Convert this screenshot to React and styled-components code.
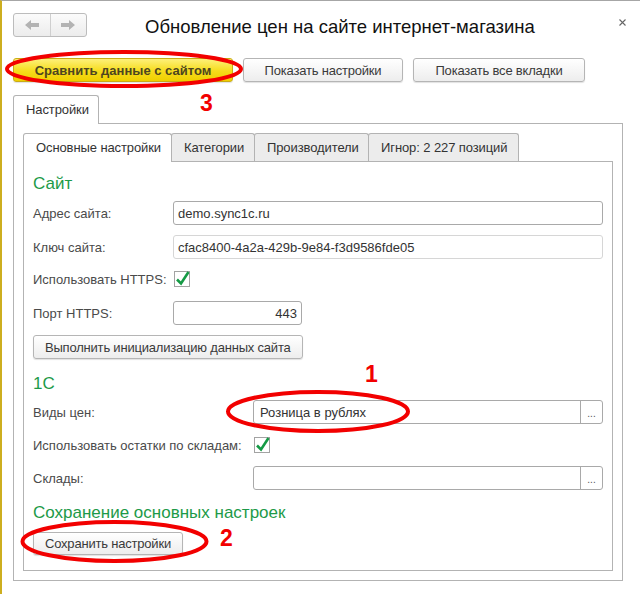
import React from "react";
import styled, { createGlobalStyle } from "styled-components";

const GlobalStyle = createGlobalStyle`
  body {
    margin: 0;
    background: #ffffff;
    font-family: "Liberation Sans", Arial, sans-serif;
  }
  * { box-sizing: border-box; }
`;

const Window = styled.div`
  position: relative;
  width: 640px;
  height: 594px;
  border-top: 1px solid #a6a6a6;
  border-left: 2px solid #cdae1f;
  background: #ffffff;
  display: flex;
  flex-direction: column;
  overflow: hidden;
`;

const Header = styled.div`
  display: flex;
  align-items: flex-start;
  padding: 12px 14px 0 11px;
  height: 36px;
`;

const Nav = styled.div`
  display: flex;
  width: 74px;
  height: 24px;
  border: 1px solid #bcbcbc;
  border-radius: 3px;
  background: linear-gradient(#fbfbfb, #ececec);
`;

const NavButton = styled.div`
  flex: 1;
  display: flex;
  align-items: center;
  justify-content: center;
  & + & {
    border-left: 1px solid #cfcfcf;
  }
`;

const Title = styled.div`
  margin: 2px 0 0 58px;
  font-size: 18.5px;
  line-height: 24px;
  color: #111111;
  white-space: nowrap;
`;

const Close = styled.div`
  margin: 6px 0 0 auto;
  width: 7px;
  height: 7px;
  display: flex;
`;

const Toolbar = styled.div`
  display: flex;
  gap: 10px;
  margin-top: 21px;
  padding-left: 11px;
`;

const Button = styled.div`
  height: ${(p) => p.$h || 24}px;
  width: ${(p) => (p.$w ? `${p.$w}px` : "auto")};
  padding: 0 11px;
  display: flex;
  align-items: center;
  justify-content: center;
  font-size: 13px;
  letter-spacing: -0.2px;
  color: #3a3a3a;
  white-space: nowrap;
  border: 1px solid #b5b5b5;
  border-radius: 3px;
  background: linear-gradient(#ffffff, #ededed);
  box-shadow: 0 1px 1px rgba(0, 0, 0, 0.12);
`;

const DefaultButton = styled(Button)`
  font-weight: bold;
  letter-spacing: 0;
  color: #4d4520;
  border-color: #c9ac14;
  background: linear-gradient(#fdf07a, #f6dc1b 55%, #efcf00);
`;

const TabStrip = styled.div`
  display: flex;
  align-items: flex-end;
  margin-top: ${(p) => p.$top || 0}px;
  padding-left: ${(p) => p.$left || 0}px;
  position: relative;
  z-index: 1;
`;

const Tab = styled.div`
  height: ${(p) => (p.$active ? 29 : 28)}px;
  width: ${(p) => p.$w}px;
  margin-bottom: ${(p) => (p.$active ? -1 : 0)}px;
  & + & {
    margin-left: -1px;
  }
  padding: 0 0 ${(p) => (p.$active ? 2 : 1)}px 12px;
  display: flex;
  align-items: center;
  font-size: 13px;
  letter-spacing: -0.1px;
  color: #333333;
  white-space: nowrap;
  border: 1px solid #b3b3b3;
  border-bottom: none;
  border-radius: 3px 3px 0 0;
  background: ${(p) => (p.$active ? "#ffffff" : "#ececec")};
`;

const OuterPanel = styled.div`
  margin-left: 11px;
  width: 610px;
  height: 458px;
  border: 1px solid #b3b3b3;
  padding: 9px;
  display: flex;
  flex-direction: column;
`;

const InnerPanel = styled.div`
  flex: 1;
  border: 1px solid #b3b3b3;
  padding: 0 9px;
  display: flex;
  flex-direction: column;
`;

const Heading = styled.div`
  margin-top: ${(p) => p.$top}px;
  height: 22px;
  font-size: 17px;
  line-height: 22px;
  color: #1d9a48;
  white-space: nowrap;
`;

const Row = styled.div`
  display: flex;
  align-items: center;
  height: 24px;
  margin-top: ${(p) => p.$top}px;
`;

const Label = styled.div`
  width: ${(p) => p.$w}px;
  flex: none;
  font-size: 13px;
  color: #4a4a4a;
  white-space: nowrap;
`;

const Field = styled.div`
  flex: ${(p) => (p.$w ? "none" : 1)};
  width: ${(p) => (p.$w ? `${p.$w}px` : "auto")};
  height: 24px;
  display: flex;
  align-items: center;
  justify-content: ${(p) => (p.$right ? "flex-end" : "flex-start")};
  padding: 0 4px;
  font-size: 13px;
  color: #333333;
  white-space: nowrap;
  border: 1px solid ${(p) => (p.$light ? "#d6d6d6" : "#a9a9a9")};
  border-radius: 3px;
  background: #ffffff;
`;

const ChoiceField = styled(Field)`
  padding: 0 0 0 6px;
  overflow: hidden;
`;

const FieldText = styled.span`
  flex: 1;
`;

const ChoiceButton = styled.div`
  width: 22px;
  height: 100%;
  border-left: 1px solid #a9a9a9;
  display: flex;
  align-items: flex-end;
  justify-content: center;
  padding-bottom: 5px;
  font-size: 10px;
  line-height: 8px;
  color: #555555;
`;

const Checkbox = styled.div`
  width: 16px;
  height: 16px;
  margin-left: 1px;
  border: 1px solid #a3a3a3;
  background: #ffffff;
  display: flex;
  svg {
    overflow: visible;
  }
`;

const Overlay = styled.svg`
  position: absolute;
  left: -2px;
  top: -1px;
  pointer-events: none;
`;

const Mark = styled.span`
  position: absolute;
  left: ${(p) => p.$x}px;
  top: ${(p) => p.$y}px;
  font-size: 23px;
  line-height: 23px;
  font-weight: bold;
  color: #f20000;
`;

function Arrow({ left }) {
  return (
    <svg width="14" height="10" viewBox="0 0 14 10">
      <polygon
        points="0,5 6,0 6,3 14,3 14,7 6,7 6,10"
        fill="#b3b3b3"
        transform={left ? undefined : "rotate(180 7 5)"}
      />
    </svg>
  );
}

function Check() {
  return (
    <svg width="14" height="14" viewBox="0 0 14 14">
      <path d="M2 7.5 L6 11.5 L13.5 0" fill="none" stroke="#159a45" strokeWidth="2.6" />
    </svg>
  );
}

function Choice({ children }) {
  return (
    <ChoiceField>
      <FieldText>{children}</FieldText>
      <ChoiceButton>...</ChoiceButton>
    </ChoiceField>
  );
}

export default function App() {
  return (
    <>
      <GlobalStyle />
      <Window>
        <Header>
          <Nav>
            <NavButton>
              <Arrow left />
            </NavButton>
            <NavButton>
              <Arrow />
            </NavButton>
          </Nav>
          <Title>Обновление цен на сайте интернет-магазина</Title>
          <Close>
            <svg width="7" height="7" viewBox="0 0 7 7">
              <path d="M0.5 0.5 L6.5 6.5 M6.5 0.5 L0.5 6.5" stroke="#666" strokeWidth="1.1" />
            </svg>
          </Close>
        </Header>

        <Toolbar>
          <DefaultButton $w={220}>Сравнить данные с сайтом</DefaultButton>
          <Button $w={160}>Показать настройки</Button>
          <Button $w={172}>Показать все вкладки</Button>
        </Toolbar>

        <TabStrip $top={13} $left={11}>
          <Tab $active $w={86}>Настройки</Tab>
        </TabStrip>
        <OuterPanel>
          <TabStrip>
            <Tab $active $w={149}>Основные настройки</Tab>
            <Tab $w={84}>Категории</Tab>
            <Tab $w={115}>Производители</Tab>
            <Tab $w={151}>Игнор: 2 227 позиций</Tab>
          </TabStrip>
          <InnerPanel>
            <Heading $top={11}>Сайт</Heading>
            <Row $top={6}>
              <Label $w={140}>Адрес сайта:</Label>
              <Field>demo.sync1c.ru</Field>
            </Row>
            <Row $top={10}>
              <Label $w={140}>Ключ сайта:</Label>
              <Field $light>cfac8400-4a2a-429b-9e84-f3d9586fde05</Field>
            </Row>
            <Row $top={8}>
              <Label $w={140}>Использовать HTTPS:</Label>
              <Checkbox>
                <Check />
              </Checkbox>
            </Row>
            <Row $top={10}>
              <Label $w={140}>Порт HTTPS:</Label>
              <Field $w={129} $right>443</Field>
            </Row>
            <Row $top={10}>
              <Button>Выполнить инициализацию данных сайта</Button>
            </Row>

            <Heading $top={14}>1С</Heading>
            <Row $top={5}>
              <Label $w={220}>Виды цен:</Label>
              <Choice>Розница в рублях</Choice>
            </Row>
            <Row $top={9}>
              <Label $w={220}>Использовать остатки по складам:</Label>
              <Checkbox>
                <Check />
              </Checkbox>
            </Row>
            <Row $top={9}>
              <Label $w={220}>Склады:</Label>
              <Choice />
            </Row>

            <Heading $top={12}>Сохранение основных настроек</Heading>
            <Row $top={7}>
              <Button $h={23}>Сохранить настройки</Button>
            </Row>
          </InnerPanel>
        </OuterPanel>

        <Overlay width="640" height="594" viewBox="0 0 640 594">
          <ellipse cx="124" cy="69" rx="117" ry="17" fill="none" stroke="#f20000" strokeWidth="4" />
          <ellipse cx="318" cy="411.5" rx="90" ry="19.5" fill="none" stroke="#f20000" strokeWidth="4" />
          <ellipse cx="114.5" cy="541.5" rx="92" ry="19.5" fill="none" stroke="#f20000" strokeWidth="4" />
        </Overlay>
        <Mark $x={198} $y={91}>3</Mark>
        <Mark $x={363} $y={362}>1</Mark>
        <Mark $x={218} $y={526}>2</Mark>
      </Window>
    </>
  );
}
